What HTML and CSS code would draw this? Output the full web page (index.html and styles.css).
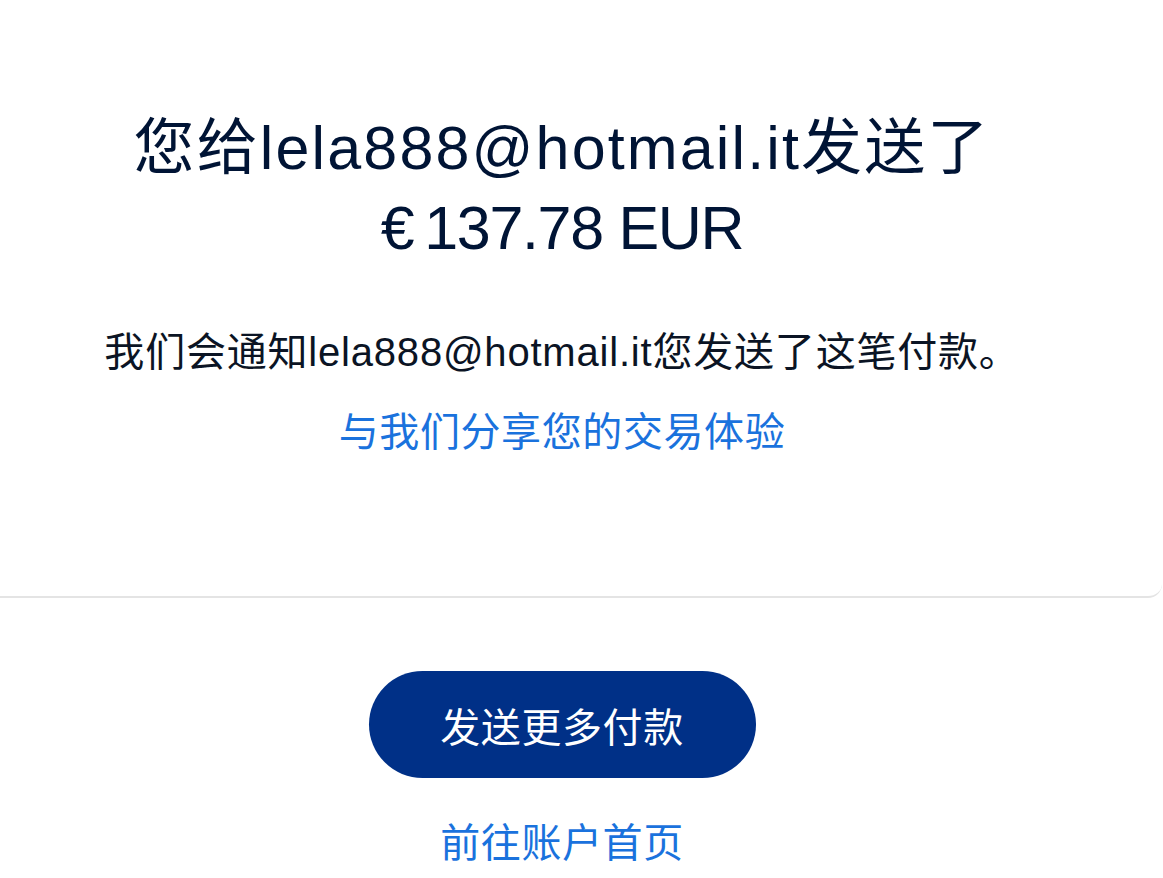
FILE: index.html
```html
<!DOCTYPE html>
<html lang="zh-CN">
<head>
    <meta charset="UTF-8">
    <meta name="viewport" content="width=device-width, initial-scale=1.0">
    <title>付款已发送</title>
    <link rel="stylesheet" href="styles.css">
</head>
<body>
    <div class="card">
        <h1 class="title">
            <span class="line">您给lela888@hotmail.it发送了</span>
            <span class="line amount">€&#8201;137.78 EUR</span>
        </h1>
        <p class="note">我们会通知lela888@hotmail.it您发送了这笔付款。</p>
        <a class="link share" href="#">与我们分享您的交易体验</a>
    </div>

    <div class="actions">
        <button class="btn-primary">发送更多付款</button>
        <a class="link home" href="#">前往账户首页</a>
    </div>
</body>
</html>
```

FILE: styles.css
```css
body {
    margin: 0;
    background-color: #fff;
    font-family: "Liberation Sans", Arial, "Noto Sans CJK SC", sans-serif;
    color: #001435;
}
.card {
    width: 1162px;
    box-sizing: border-box;
    padding: 108px 38px 136px 0;
    border-bottom: 2px solid #e4e4e4;
    border-bottom-right-radius: 14px;
    display: flex;
    flex-direction: column;
    align-items: center;
    text-align: center;
}
.title {
    margin: 0;
    font-size: 61px;
    font-weight: normal;
    line-height: 80px;
    letter-spacing: 0.035em;
}
.title .line {
    display: block;
}
.title .amount {
    letter-spacing: -0.022em;
}
.note {
    margin: 56px 0 0;
    font-size: 40px;
    line-height: 56px;
    letter-spacing: 0.02em;
    color: #0b1424;
}
.link {
    color: #1a72dd;
    text-decoration: none;
    font-size: 40px;
    line-height: 56px;
    letter-spacing: 0.015em;
}
.share {
    margin-top: 24px;
}
.actions {
    width: 1124px;
    display: flex;
    flex-direction: column;
    align-items: center;
    padding-top: 73px;
}
.btn-primary {
    width: 387px;
    height: 107px;
    border: none;
    border-radius: 54px;
    background-color: #003087;
    color: #fff;
    font-family: inherit;
    font-size: 40px;
    letter-spacing: 0.015em;
    cursor: pointer;
}
.home {
    margin-top: 37px;
}
```
